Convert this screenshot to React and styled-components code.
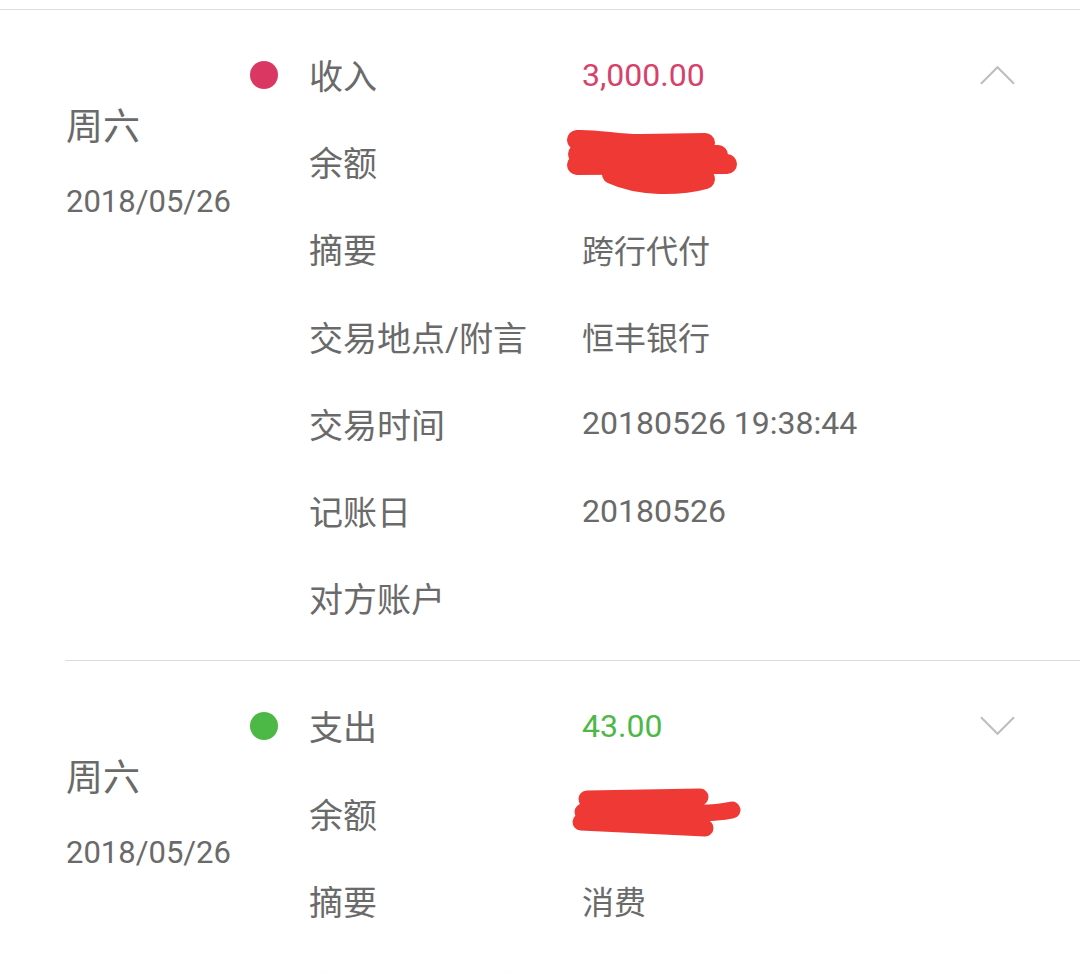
import React from "react";
import styled, { createGlobalStyle } from "styled-components";

const GlobalStyle = createGlobalStyle`
  html, body {
    margin: 0;
    padding: 0;
    background: #fff;
  }
  body {
    font-family: Roboto, "Noto Sans CJK SC", sans-serif;
    color: #666;
  }
`;

const Page = styled.div`
  padding-top: 9px;
  width: 1080px;
`;

const Rule = styled.div`
  height: 1px;
  background: #dcdcdc;
  margin-left: ${({ $inset }) => ($inset ? "65px" : "0")};
`;

const Record = styled.section`
  display: grid;
  grid-template-columns: 250px 1fr;
  padding: 21px 0 19px;
`;

const DayColumn = styled.div`
  padding: 77px 0 0 66px;
`;

const Weekday = styled.div`
  font-size: 37px;
  line-height: 40px;
  color: #6a6a6a;
`;

const DateText = styled.div`
  margin-top: 34px;
  font-size: 31px;
  line-height: 40px;
  color: #6a6a6a;
`;

const Details = styled.div`
  display: flex;
  flex-direction: column;
`;

const Row = styled.div`
  display: grid;
  grid-template-columns: 59px 273px 1fr 100px;
  align-items: center;
  height: 87.2px;
`;

const Dot = styled.span`
  width: 28px;
  height: 28px;
  border-radius: 50%;
  background: ${({ $color }) => $color};
`;

const Label = styled.span`
  font-size: 34px;
  color: #6a6a6a;
  white-space: nowrap;
`;

const Value = styled.span`
  font-size: 32px;
  color: ${({ $color }) => $color || "#6a6a6a"};
  white-space: nowrap;
`;

const Toggle = styled.span`
  display: flex;
  justify-content: flex-end;
  padding-right: 65px;
`;

const Scribble = styled.svg`
  display: block;
  margin-left: -15px;
`;

const Chevron = ({ up }) => (
  <svg width="36" height="20" viewBox="0 0 36 20">
    <path
      d={up ? "M1 19 L18 2 L35 19" : "M1 1 L18 18 L35 1"}
      fill="none"
      stroke="#bdbdbd"
      strokeWidth="2"
    />
  </svg>
);

const ScribbleOne = () => (
  <Scribble width="175" height="70" viewBox="0 0 175 70">
    <g fill="none" stroke="#ee3935" strokeWidth="20" strokeLinecap="round" strokeLinejoin="round">
      <path d="M10 13 C 30 12, 55 18, 75 17 L 138 16" />
      <path d="M11 27 L 151 28" />
      <path d="M10 38 L 160 37" />
      <path d="M45 47 C 73 60, 113 59, 138 52" />
    </g>
  </Scribble>
);

const ScribbleTwo = () => (
  <Scribble width="175" height="56" viewBox="0 0 175 56">
    <g fill="none" stroke="#ee3935" strokeWidth="17" strokeLinecap="round" strokeLinejoin="round">
      <path d="M20 14 L 133 12" />
      <path d="M16 27 L 133 28 C 145 28, 155 27, 165 25" />
      <path d="M14 37 L 138 43" />
    </g>
  </Scribble>
);

const records = [
  {
    id: 1,
    open: true,
    kind: "收入",
    dot: "#da3862",
    amountColor: "#d7416a",
    amount: "3,000.00",
    balance: <ScribbleOne />,
    rows: [
      ["摘要", "跨行代付"],
      ["交易地点/附言", "恒丰银行"],
      ["交易时间", "20180526 19:38:44"],
      ["记账日", "20180526"],
      ["对方账户", ""],
    ],
  },
  {
    id: 2,
    open: false,
    kind: "支出",
    dot: "#4cb846",
    amountColor: "#4cb846",
    amount: "43.00",
    balance: <ScribbleTwo />,
    rows: [
      ["摘要", "消费"],
      ["交易地点/附言", ""],
      ["交易时间", "20180526 12:16:05"],
      ["记账日", "20180526"],
    ],
  },
];

const TransactionRecord = ({ record }) => (
  <Record>
    <DayColumn>
      <Weekday>周六</Weekday>
      <DateText>2018/05/26</DateText>
    </DayColumn>
    <Details>
      <Row>
        <Dot $color={record.dot} />
        <Label>{record.kind}</Label>
        <Value $color={record.amountColor}>{record.amount}</Value>
        <Toggle>
          <Chevron up={record.open} />
        </Toggle>
      </Row>
      <Row>
        <span />
        <Label>余额</Label>
        {record.balance}
      </Row>
      {record.rows.map(([label, value]) => (
        <Row key={label}>
          <span />
          <Label>{label}</Label>
          <Value>{value}</Value>
        </Row>
      ))}
    </Details>
  </Record>
);

const App = () => (
  <Page>
    <GlobalStyle />
    <Rule />
    {records.map((record, i) => (
      <React.Fragment key={record.id}>
        {i > 0 && <Rule $inset />}
        <TransactionRecord record={record} />
      </React.Fragment>
    ))}
  </Page>
);

export default App;
